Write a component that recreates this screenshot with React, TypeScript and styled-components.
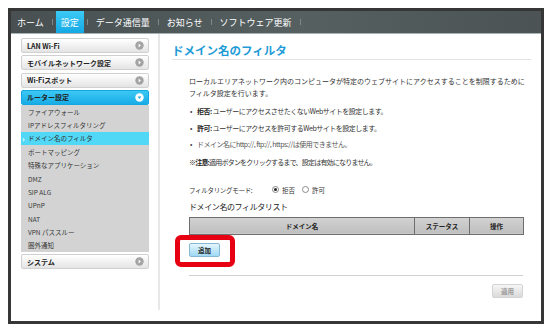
import React from "react";
import styled, { createGlobalStyle } from "styled-components";

const GlobalStyle = createGlobalStyle`
  html, body { margin: 0; padding: 0; background: #fff; }
  body { font-family: "Noto Sans CJK JP", "Noto Sans", sans-serif; color: #333; }
  * { box-sizing: border-box; }
`;

const Frame = styled.div`
  margin: 8px 0 0 8px;
  width: 536px;
  height: 316px;
  border: 3px solid #363636;
  display: flex;
  flex-direction: column;
  background: #fff;
`;

const NavBar = styled.nav`
  height: 23px;
  flex: none;
  display: flex;
  align-items: stretch;
  padding-left: 1px;
  background: linear-gradient(to right, #485052, #566060 55%, #4b5355);
  border-bottom: 1px solid #aab3b3;
`;

const NavItem = styled.div<{ $active?: boolean }>`
  display: flex;
  align-items: center;
  padding: 0 5px;
  font-size: 9px;
  color: #fff;
  white-space: nowrap;
  background: ${(p) => (p.$active ? "linear-gradient(#3ccaf5, #14a9e5)" : "transparent")};
`;

const NavSep = styled.span`
  align-self: center;
  width: 1px;
  height: 6px;
  margin: 0 3px;
  background: #7e8888;
`;

const Body = styled.div`
  flex: 1;
  display: flex;
  min-height: 0;
`;

const Sidebar = styled.aside`
  width: 147px;
  flex: none;
  padding: 4px 0 0 10px;
  display: flex;
  flex-direction: column;
  gap: 2.3px;
`;

const MenuGroup = styled.div`
  display: flex;
  flex-direction: column;
  width: 128px;
`;

const MenuHeader = styled.div<{ $active?: boolean }>`
  width: 128px;
  height: 15px;
  display: flex;
  align-items: center;
  justify-content: space-between;
  padding: 0 4px 0 5px;
  border: 1px solid ${(p) => (p.$active ? "#14a8e2" : "#d0d0d0")};
  border-radius: 2px;
  font-size: 7px;
  font-weight: bold;
  color: #222;
  white-space: nowrap;
  background: ${(p) =>
    p.$active ? "linear-gradient(#3cc8f4, #18ace6)" : "linear-gradient(#ffffff, #e4e4e4)"};
`;

const SubMenu = styled.div`
  background: #d3d3d3;
  display: flex;
  flex-direction: column;
`;

const SubItem = styled.div<{ $active?: boolean }>`
  position: relative;
  height: 13.4px;
  display: flex;
  align-items: center;
  padding-left: 7px;
  font-size: 6.5px;
  color: #333;
  white-space: nowrap;
  background: ${(p) => (p.$active ? "#50d8f6" : "transparent")};
  &::before {
    content: ${(p) => (p.$active ? '"›"' : "none")};
    position: absolute;
    left: 1px;
    color: #fff;
    font-size: 8px;
    font-weight: bold;
  }
`;

const Main = styled.main`
  flex: 1;
  align-self: flex-start;
  height: 276px;
  border-left: 2px solid #e8e8e8;
  padding: 9px 10px 0 12px;
`;

const Title = styled.h1`
  margin: 0;
  padding-bottom: 2px;
  font-size: 11.5px;
  line-height: 14px;
  font-weight: bold;
  color: #1e9bd7;
  border-bottom: 1px solid #e3e3e3;
`;

const Content = styled.div`
  padding: 0 0 0 17px;
  width: 351px;
`;

const Para = styled.p`
  margin: 16px 0 0;
  font-size: 7px;
  line-height: 11.5px;
  color: #333;
  white-space: nowrap;
`;

const Bullets = styled.ul`
  margin: 7px 0 0;
  padding: 0;
  list-style: none;
  display: flex;
  flex-direction: column;
  gap: 5.5px;
`;

const Bullet = styled.li<{ $muted?: boolean }>`
  position: relative;
  padding-left: 8px;
  font-size: 7px;
  line-height: 11px;
  letter-spacing: -0.5px;
  white-space: nowrap;
  color: ${(p) => (p.$muted ? "#555" : "#333")};
  &::before {
    content: "•";
    position: absolute;
    left: 1px;
    color: #444;
  }
`;

const Strong = styled.b`
  font-weight: bold;
  color: #222;
`;

const Note = styled.p`
  margin: 7px 0 0;
  font-size: 7px;
  line-height: 11px;
  letter-spacing: -0.8px;
  white-space: nowrap;
`;

const ModeRow = styled.div`
  margin-top: 16px;
  height: 11px;
  display: flex;
  align-items: center;
  font-size: 6.5px;
  color: #333;
`;

const ModeLabel = styled.span`
  width: 83px;
  letter-spacing: -0.3px;
`;

const RadioOption = styled.label`
  display: flex;
  align-items: center;
  gap: 3px;
  margin-right: 7px;
  font-size: 6.5px;
`;

const RadioDot = styled.span<{ $checked?: boolean }>`
  width: 7px;
  height: 7px;
  border-radius: 50%;
  border: 1px solid #8a8a8a;
  background: #fff;
  display: flex;
  align-items: center;
  justify-content: center;
  &::after {
    content: "";
    width: 3px;
    height: 3px;
    border-radius: 50%;
    background: ${(p) => (p.$checked ? "#222" : "transparent")};
  }
`;

const ListHeading = styled.h2`
  margin: 5.5px 0 0;
  font-size: 8px;
  line-height: 12px;
  font-weight: normal;
  letter-spacing: -0.4px;
  color: #222;
`;

const Table = styled.table`
  margin-top: 4px;
  width: 334px;
  border-collapse: collapse;
  table-layout: fixed;
`;

const Th = styled.th<{ $w: number }>`
  width: ${(p) => p.$w}px;
  height: 17px;
  padding: 0;
  border: 1px solid #6e6e6e;
  background: linear-gradient(#d2d2d2, #bfbfbf);
  font-size: 6.5px;
  font-weight: bold;
  color: #222;
  text-align: center;
`;

const AddWrap = styled.div`
  position: relative;
  margin-top: 8px;
  width: 31px;
  height: 14px;
`;

const AddButton = styled.button`
  display: block;
  width: 31px;
  height: 14px;
  margin: 0;
  padding: 0;
  border: 1px solid #86b8d2;
  border-radius: 2px;
  background: linear-gradient(#e4f5fd, #9fd9f5);
  font-family: inherit;
  font-size: 6.5px;
  line-height: 12px;
  font-weight: bold;
  color: #222;
`;

const Highlight = styled.span`
  position: absolute;
  left: -14px;
  top: -8px;
  width: 60px;
  height: 32px;
  border: 5px solid #e60012;
  border-radius: 6px;
  pointer-events: none;
`;

const Divider = styled.hr`
  margin: 18px 0 0;
  width: 334px;
  border: 0;
  border-top: 1px solid #d0d0d0;
`;

const Footer = styled.div`
  width: 334px;
  display: flex;
  justify-content: flex-end;
  margin-top: 8px;
`;

const ApplyButton = styled.button`
  display: block;
  width: 31px;
  height: 14px;
  margin: 0;
  padding: 0;
  border: 1px solid #d4d4d4;
  border-radius: 2px;
  background: linear-gradient(#f6f6f6, #dadada);
  font-family: inherit;
  font-size: 6.5px;
  line-height: 12px;
  font-weight: bold;
  color: #9a9a9a;
`;

const ArrowIcon = ({ down }: { down?: boolean }) => (
  <svg width="9" height="9" viewBox="0 0 9 9">
    <circle cx="4.5" cy="4.5" r="4.2" fill={down ? "#ffffff" : "#a3a3a3"} />
    {down ? (
      <path d="M2.6 3.6 L6.4 3.6 L4.5 5.9 Z" fill="#1aa8e2" />
    ) : (
      <path d="M3.6 2.6 L5.9 4.5 L3.6 6.4 Z" fill="#ffffff" />
    )}
  </svg>
);

const navItems = ["ホーム", "設定", "データ通信量", "お知らせ", "ソフトウェア更新"];
const subItems = [
  "ファイアウォール",
  "IPアドレスフィルタリング",
  "ドメイン名のフィルタ",
  "ポートマッピング",
  "特殊なアプリケーション",
  "DMZ",
  "SIP ALG",
  "UPnP",
  "NAT",
  "VPN パススルー",
  "圏外通知",
];

export default function App() {
  return (
    <>
      <GlobalStyle />
      <Frame>
        <NavBar>
          {navItems.map((n) => (
            <React.Fragment key={n}>
              <NavItem $active={n === "設定"}>{n}</NavItem>
              <NavSep />
            </React.Fragment>
          ))}
        </NavBar>
        <Body>
          <Sidebar>
            <MenuHeader>
              LAN Wi-Fi <ArrowIcon />
            </MenuHeader>
            <MenuHeader>
              モバイルネットワーク設定 <ArrowIcon />
            </MenuHeader>
            <MenuHeader>
              Wi-Fiスポット <ArrowIcon />
            </MenuHeader>
            <MenuGroup>
              <MenuHeader $active>
                ルーター設定 <ArrowIcon down />
              </MenuHeader>
              <SubMenu>
                {subItems.map((s) => (
                  <SubItem key={s} $active={s === "ドメイン名のフィルタ"}>
                    {s}
                  </SubItem>
                ))}
              </SubMenu>
            </MenuGroup>
            <MenuHeader>
              システム <ArrowIcon />
            </MenuHeader>
          </Sidebar>
          <Main>
            <Title>ドメイン名のフィルタ</Title>
            <Content>
              <Para>
                ローカルエリアネットワーク内のコンピュータが特定のウェブサイトにアクセスすることを制限するために
                <br />
                フィルタ設定を行います。
              </Para>
              <Bullets>
                <Bullet>
                  <Strong>拒否:</Strong> ユーザーにアクセスさせたくないWebサイトを設定します。
                </Bullet>
                <Bullet>
                  <Strong>許可:</Strong> ユーザーにアクセスを許可するWebサイトを設定します。
                </Bullet>
                <Bullet $muted>ドメイン名にhttp://, ftp://, https://は使用できません。</Bullet>
              </Bullets>
              <Note>
                <Strong>※注意:</Strong>適用ボタンをクリックするまで、設定は有効になりません。
              </Note>
              <ModeRow>
                <ModeLabel>フィルタリングモード:</ModeLabel>
                <RadioOption>
                  <RadioDot $checked />
                  拒否
                </RadioOption>
                <RadioOption>
                  <RadioDot />
                  許可
                </RadioOption>
              </ModeRow>
              <ListHeading>ドメイン名のフィルタリスト</ListHeading>
              <Table>
                <thead>
                  <tr>
                    <Th $w={225}>ドメイン名</Th>
                    <Th $w={55}>ステータス</Th>
                    <Th $w={54}>操作</Th>
                  </tr>
                </thead>
              </Table>
              <AddWrap>
                <AddButton>追加</AddButton>
                <Highlight />
              </AddWrap>
              <Divider />
              <Footer>
                <ApplyButton>適用</ApplyButton>
              </Footer>
            </Content>
          </Main>
        </Body>
      </Frame>
    </>
  );
}
